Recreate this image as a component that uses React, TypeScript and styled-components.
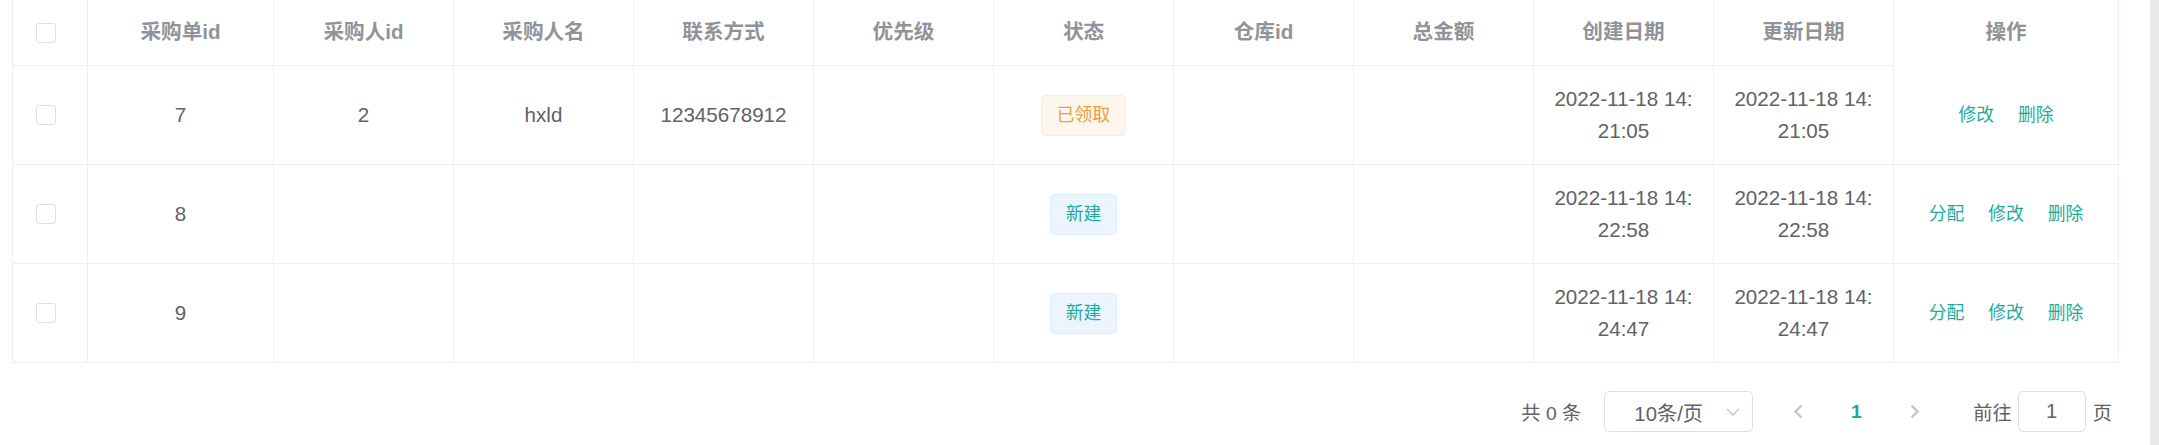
import React from "react";
import styled, { createGlobalStyle } from "styled-components";

const GlobalStyle = createGlobalStyle`
  html, body { margin: 0; padding: 0; background: #ffffff; }
  body {
    font-family: "Liberation Sans", Arial, "Noto Sans CJK SC", sans-serif;
    color: #606266;
  }
  * { box-sizing: border-box; }
`;

const TEAL = "#1bab9c";
const BORDER = "#ebeef5";

const Page = styled.div`
  display: flex;
  width: 2159px;
  height: 445px;
  overflow: hidden;
`;

const Content = styled.div`
  flex: 1;
  display: flex;
  flex-direction: column;
  padding: 0 31px 0 12px;
`;

const ScrollTrack = styled.div`
  width: 9px;
  background: #e8e9ec;
`;

const Table = styled.div`
  display: grid;
  grid-template-columns: 75px 186px repeat(9, 180px) 224px;
  grid-template-rows: 66px repeat(3, 99px);
  border-left: 1px solid ${BORDER};
  border-right: 1px solid ${BORDER};
`;

const Cell = styled.div<{ $last?: boolean; $head?: boolean; $noBottom?: boolean; $check?: boolean }>`
  display: flex;
  align-items: center;
  justify-content: ${(p) => (p.$check ? "flex-start" : "center")};
  padding: ${(p) => (p.$check ? "0 0 0 23px" : "0 13px")};
  text-align: center;
  border-right: ${(p) => (p.$last ? "none" : `1px solid ${BORDER}`)};
  border-bottom: 1px solid ${(p) => (p.$noBottom ? "#ffffff" : BORDER)};
  font-size: 20.6px;
  line-height: 32.5px;
  color: ${(p) => (p.$head ? "#909399" : "#606266")};
  font-weight: ${(p) => (p.$head ? 700 : 400)};
`;

const CheckBox = styled.span`
  display: inline-block;
  width: 20px;
  height: 20px;
  border: 1px solid #dcdfe6;
  border-radius: 3px;
  background: #fff;
`;

const Tag = styled.span<{ $type: "warning" | "info" }>`
  display: inline-flex;
  align-items: center;
  height: 41px;
  padding: 0 15px;
  font-size: 17.8px;
  border-radius: 5px;
  border: 1px solid ${(p) => (p.$type === "warning" ? "#faecd8" : "#d9ecff")};
  background: ${(p) => (p.$type === "warning" ? "#fdf6ec" : "#ecf5ff")};
  color: ${(p) => (p.$type === "warning" ? "#e6a23c" : TEAL)};
`;

const Actions = styled.div`
  display: flex;
  gap: 24px;
`;

const LinkBtn = styled.span`
  font-size: 17.8px;
  color: ${TEAL};
  cursor: pointer;
`;

const Pager = styled.div`
  display: flex;
  align-items: center;
  justify-content: flex-end;
  margin-top: 28px;
  height: 41px;
  padding-right: 7px;
  font-size: 19.25px;
  color: #606266;
`;

const Total = styled.span`
  margin-right: 23px;
  white-space: pre;
`;

const SizeSelect = styled.div`
  display: flex;
  align-items: center;
  width: 149px;
  height: 41px;
  border: 1px solid #dcdfe6;
  border-radius: 5px;
  padding-left: 21px;
  margin-right: 21px;
  font-size: 20.3px;
`;

const SelectText = styled.span`
  flex: 1;
  text-align: center;
`;

const SelectIcon = styled.span`
  width: 41px;
  display: flex;
  justify-content: center;
  padding-left: 3px;
`;

const NavBtn = styled.span`
  width: 48px;
  display: flex;
  justify-content: center;
  align-items: center;
`;

const PageNum = styled.span`
  width: 68px;
  text-align: center;
  font-weight: 700;
  color: ${TEAL};
`;

const Jump = styled.span`
  margin-left: 35px;
  display: flex;
  align-items: center;
  gap: 6px;
`;

const JumpInput = styled.span`
  width: 68px;
  height: 41px;
  border: 1px solid #dcdfe6;
  border-radius: 5px;
  display: flex;
  align-items: center;
  justify-content: center;
  font-size: 20.3px;
  margin-right: 1px;
`;

type Row = {
  id: string;
  buyerId: string;
  name: string;
  phone: string;
  status: string;
  type: "warning" | "info";
  created: [string, string];
  updated: [string, string];
  actions: string[];
};

const rows: Row[] = [
  {
    id: "7",
    buyerId: "2",
    name: "hxld",
    phone: "12345678912",
    status: "已领取",
    type: "warning",
    created: ["2022-11-18 14:", "21:05"],
    updated: ["2022-11-18 14:", "21:05"],
    actions: ["修改", "删除"],
  },
  {
    id: "8",
    buyerId: "",
    name: "",
    phone: "",
    status: "新建",
    type: "info",
    created: ["2022-11-18 14:", "22:58"],
    updated: ["2022-11-18 14:", "22:58"],
    actions: ["分配", "修改", "删除"],
  },
  {
    id: "9",
    buyerId: "",
    name: "",
    phone: "",
    status: "新建",
    type: "info",
    created: ["2022-11-18 14:", "24:47"],
    updated: ["2022-11-18 14:", "24:47"],
    actions: ["分配", "修改", "删除"],
  },
];

const headers = ["采购单id", "采购人id", "采购人名", "联系方式", "优先级", "状态", "仓库id", "总金额", "创建日期", "更新日期"];

const Chevron = ({ dir }: { dir: "left" | "right" }) => (
  <svg width="11" height="15" viewBox="0 0 11 15">
    <polyline
      points={dir === "left" ? "8.5,1.5 2.5,7.5 8.5,13.5" : "2.5,1.5 8.5,7.5 2.5,13.5"}
      fill="none"
      stroke="#c0c4cc"
      strokeWidth="2.4"
    />
  </svg>
);

const ChevronDown = () => (
  <svg width="14" height="8" viewBox="0 0 14 8">
    <polyline points="1,1 7,7 13,1" fill="none" stroke="#c0c4cc" strokeWidth="1.4" />
  </svg>
);

export default function App() {
  return (
    <>
      <GlobalStyle />
      <Page>
        <Content>
          <Table>
            <Cell $head $check>
              <CheckBox />
            </Cell>
            {headers.map((h) => (
              <Cell $head key={h}>
                {h}
              </Cell>
            ))}
            <Cell $head $last $noBottom>
              操作
            </Cell>
            {rows.map((r) => (
              <React.Fragment key={r.id}>
                <Cell $check>
                  <CheckBox />
                </Cell>
                <Cell>{r.id}</Cell>
                <Cell>{r.buyerId}</Cell>
                <Cell>{r.name}</Cell>
                <Cell>{r.phone}</Cell>
                <Cell />
                <Cell>
                  <Tag $type={r.type}>{r.status}</Tag>
                </Cell>
                <Cell />
                <Cell />
                <Cell>
                  {r.created[0]}
                  <br />
                  {r.created[1]}
                </Cell>
                <Cell>
                  {r.updated[0]}
                  <br />
                  {r.updated[1]}
                </Cell>
                <Cell $last>
                  <Actions>
                    {r.actions.map((a) => (
                      <LinkBtn key={a}>{a}</LinkBtn>
                    ))}
                  </Actions>
                </Cell>
              </React.Fragment>
            ))}
          </Table>
          <Pager>
            <Total>共 0 条</Total>
            <SizeSelect>
              <SelectText>10条/页</SelectText>
              <SelectIcon>
                <ChevronDown />
              </SelectIcon>
            </SizeSelect>
            <NavBtn>
              <Chevron dir="left" />
            </NavBtn>
            <PageNum>1</PageNum>
            <NavBtn>
              <Chevron dir="right" />
            </NavBtn>
            <Jump>
              前往
              <JumpInput>1</JumpInput>
              页
            </Jump>
          </Pager>
        </Content>
        <ScrollTrack />
      </Page>
    </>
  );
}
